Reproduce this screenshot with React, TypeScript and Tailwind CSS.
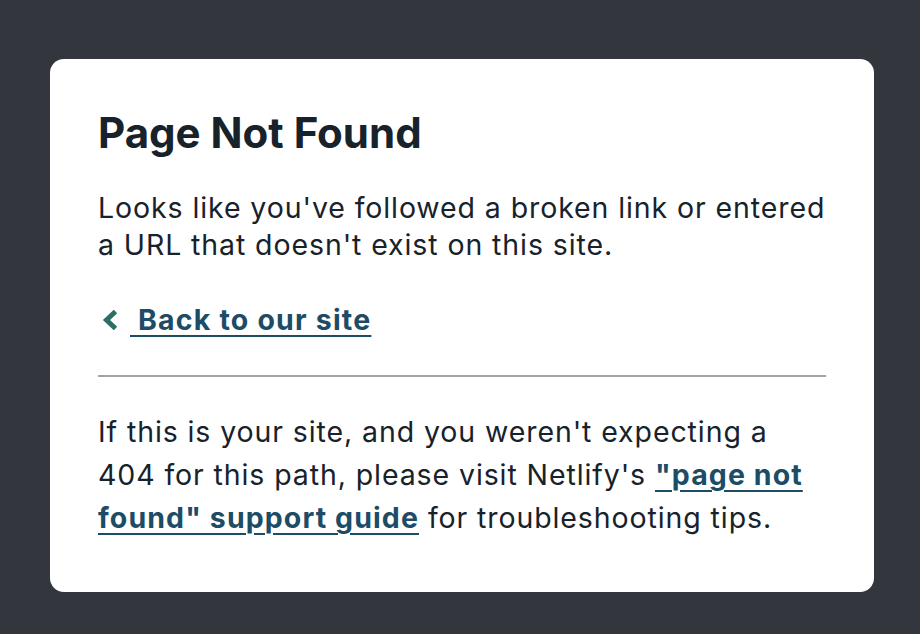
const ChevronLeft = () => (
  <svg width="18" height="22" viewBox="0 0 18 22" className="shrink-0">
    <polyline
      points="15.5,2.5 6.5,11 15.5,19.5"
      fill="none"
      stroke="#2c6e62"
      strokeWidth="5"
      strokeLinejoin="miter"
    />
  </svg>
);

const App = () => {
  return (
    <main
      className="min-h-screen bg-[#33373d] pl-[50px] pr-[46px] pt-[59px] text-[#17222b]"
      style={{ fontFamily: "Inter, 'Noto Sans', sans-serif" }}
    >
      <div className="rounded-[14px] bg-white px-12 pb-[53px] pt-[48px]">
        <h1 className="text-[42px] font-bold leading-[52px]">Page Not Found</h1>
        <p className="mt-[30px] text-[28.5px] leading-[37px] tracking-[0.9px]">
          Looks like you've followed a broken link or entered a URL that
          doesn't exist on this site.
        </p>
        <p className="mt-[38px] flex items-center text-[28.5px] leading-[37px] tracking-[1.2px]">
          <span className="ml-[2px] mr-[12px]">
            <ChevronLeft />
          </span>
          <a
            href="#"
            className="font-bold text-[#1d4c66] underline decoration-2 underline-offset-[5px]"
          >
            {"\u00a0"}Back to our site
          </a>
        </p>
        <hr className="mt-[37px] border-t-2 border-[#a3a3a3]" />
        <p className="mt-[33px] text-[28.5px] leading-[43px] tracking-[0.9px]">
          If this is your site, and you weren't expecting a 404 for this path,
          please visit Netlify's{" "}
          <a
            href="#"
            className="font-bold tracking-[1.1px] text-[#1d4c66] underline decoration-2 underline-offset-[5px]"
          >
            "page not found" support guide
          </a>{" "}
          for troubleshooting tips.
        </p>
      </div>
    </main>
  );
};

export default App;
